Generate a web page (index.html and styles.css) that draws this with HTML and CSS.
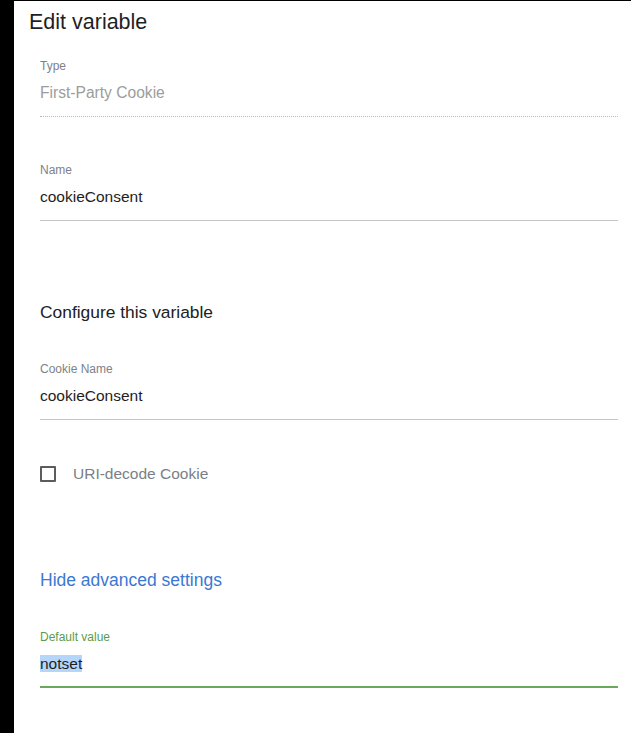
FILE: index.html
```html
<!DOCTYPE html>
<html lang="en">
<head>
<meta charset="utf-8">
<title>Edit variable</title>
<link rel="stylesheet" href="styles.css">
</head>
<body>
<div class="frame">
  <main class="panel">
    <h1 class="title">Edit variable</h1>

    <div class="body">
      <div class="field field-type">
        <div class="field-label">Type</div>
        <div class="field-value readonly">First-Party Cookie</div>
      </div>

      <div class="field field-name">
        <div class="field-label">Name</div>
        <div class="field-value">cookieConsent</div>
      </div>

      <h2 class="section-title">Configure this variable</h2>

      <div class="field field-cookie">
        <div class="field-label">Cookie Name</div>
        <div class="field-value">cookieConsent</div>
      </div>

      <label class="check-row">
        <span class="checkbox"></span>
        <span class="check-label">URI-decode Cookie</span>
      </label>

      <a class="toggle-link">Hide advanced settings</a>

      <div class="field field-default focused">
        <div class="field-label">Default value</div>
        <div class="field-value"><span class="selected">notset</span></div>
      </div>
    </div>
  </main>
</div>
</body>
</html>
```

FILE: styles.css
```css
html, body {
  margin: 0;
  padding: 0;
  background: #000;
}

body {
  font-family: "Liberation Sans", Arial, sans-serif;
  color: #202124;
}

.frame {
  padding: 1px 0 0 14px;
  height: 732px;
  overflow: hidden;
}

.panel {
  background: #fff;
  height: 100%;
  padding: 9px 13px 0 15px;
  box-sizing: border-box;
}

.title {
  margin: 0;
  font-size: 21.5px;
  font-weight: 400;
  line-height: 24px;
  color: #1f1f1f;
}

.body {
  padding-left: 11px;
  display: flex;
  flex-direction: column;
}

.field {
  display: flex;
  flex-direction: column;
}

.field-label {
  font-size: 12px;
  line-height: 16px;
  color: #7d828a;
}

.field-value {
  margin-top: 8px;
  font-size: 15.5px;
  line-height: 22px;
  padding-bottom: 12px;
  border-bottom: 1px solid #c6c6c6;
  color: #1e1e1e;
}

.field-value.readonly {
  color: #9c9c9c;
  font-size: 15.6px;
  border-bottom: 1px dotted #b8b8b8;
}

.field-type { margin-top: 24px; }
.field-name { margin-top: 45px; }
.field-name .field-value,
.field-cookie .field-value { border-bottom-width: 1.5px; }

.section-title {
  margin: 80px 0 0;
  font-size: 17.4px;
  font-weight: 400;
  line-height: 22px;
  color: #202124;
}

.field-cookie { margin-top: 38px; }

.check-row {
  margin-top: 44px;
  display: flex;
  align-items: center;
  gap: 17px;
  height: 20px;
}

.checkbox {
  width: 16px;
  height: 16px;
  box-sizing: border-box;
  border: 2px solid #5c5c5c;
  border-radius: 1px;
}

.check-label {
  font-size: 15.5px;
  color: #7a7f86;
}

.toggle-link {
  margin-top: 85px;
  font-size: 17.5px;
  line-height: 22px;
  color: #3b78d3;
  cursor: pointer;
  align-self: flex-start;
}

.field-default { margin-top: 38px; }

.focused .field-label { color: #5b9c4c; }

.focused .field-value {
  border-bottom: 2px solid #6aa95c;
  padding-bottom: 11px;
}

.selected {
  background: #b5d5fb;
}
```
